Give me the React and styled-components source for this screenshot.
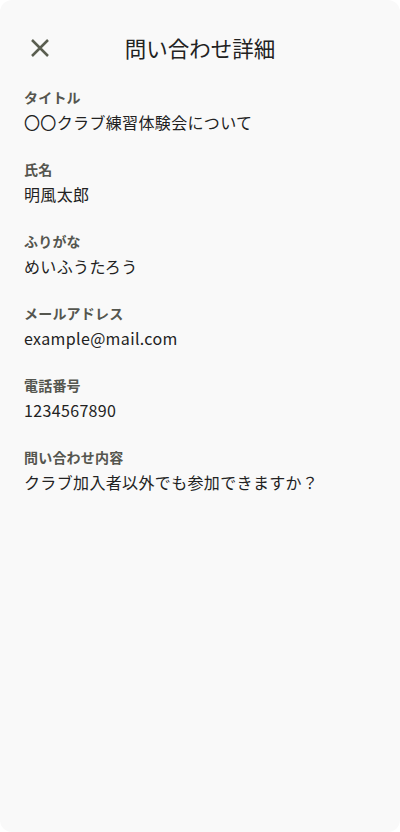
import React from "react";
import styled, { createGlobalStyle } from "styled-components";

const GlobalStyle = createGlobalStyle`
  html, body {
    margin: 0;
    padding: 0;
    background: #ffffff;
  }
  body {
    font-family: "Noto Sans CJK JP", "Noto Sans", sans-serif;
  }
`;

const fields = [
  { label: "タイトル", value: "〇〇クラブ練習体験会について" },
  { label: "氏名", value: "明風太郎" },
  { label: "ふりがな", value: "めいふうたろう" },
  { label: "メールアドレス", value: "example@mail.com" },
  { label: "電話番号", value: "1234567890" },
  { label: "問い合わせ内容", value: "クラブ加入者以外でも参加できますか？" },
];

const App = () => {
  return (
    <>
      <GlobalStyle />
      <Sheet>
        <Header>
          <CloseButton aria-label="閉じる">
            <svg width="20" height="20" viewBox="0 0 20 20">
              <path
                d="M2 2 L18 18 M18 2 L2 18"
                stroke="#5a5e50"
                strokeWidth="2.5"
                fill="none"
              />
            </svg>
          </CloseButton>
          <Title>問い合わせ詳細</Title>
        </Header>
        <List>
          {fields.map(field => (
            <Field key={field.label}>
              <Label>{field.label}</Label>
              <Value>{field.value}</Value>
            </Field>
          ))}
        </List>
      </Sheet>
    </>
  );
};

const Sheet = styled.div`
  box-sizing: border-box;
  width: 400px;
  height: 832px;
  background: #f9f9f9;
  border-radius: 12px;
  padding: 24px;
`;

const Header = styled.div`
  position: relative;
  display: flex;
  align-items: center;
  justify-content: center;
  height: 48px;
  margin-bottom: 15px;
`;

const CloseButton = styled.button`
  position: absolute;
  left: 0;
  top: 8px;
  width: 32px;
  height: 32px;
  display: flex;
  align-items: center;
  justify-content: center;
  padding: 0;
  border: none;
  background: transparent;
`;

const Title = styled.h1`
  margin: 0;
  font-size: 21.5px;
  font-weight: 400;
  line-height: 48px;
  color: #222222;
`;

const List = styled.dl`
  display: flex;
  flex-direction: column;
  gap: 25px;
  margin: 0;
`;

const Field = styled.div`
  display: flex;
  flex-direction: column;
  gap: 3px;
`;

const Label = styled.dt`
  font-size: 14px;
  font-weight: 700;
  line-height: 20px;
  letter-spacing: 0.2px;
  color: #55564f;
`;

const Value = styled.dd`
  margin: 0;
  font-size: 16px;
  line-height: 24px;
  letter-spacing: 0.35px;
  color: #222222;
`;

export default App;
